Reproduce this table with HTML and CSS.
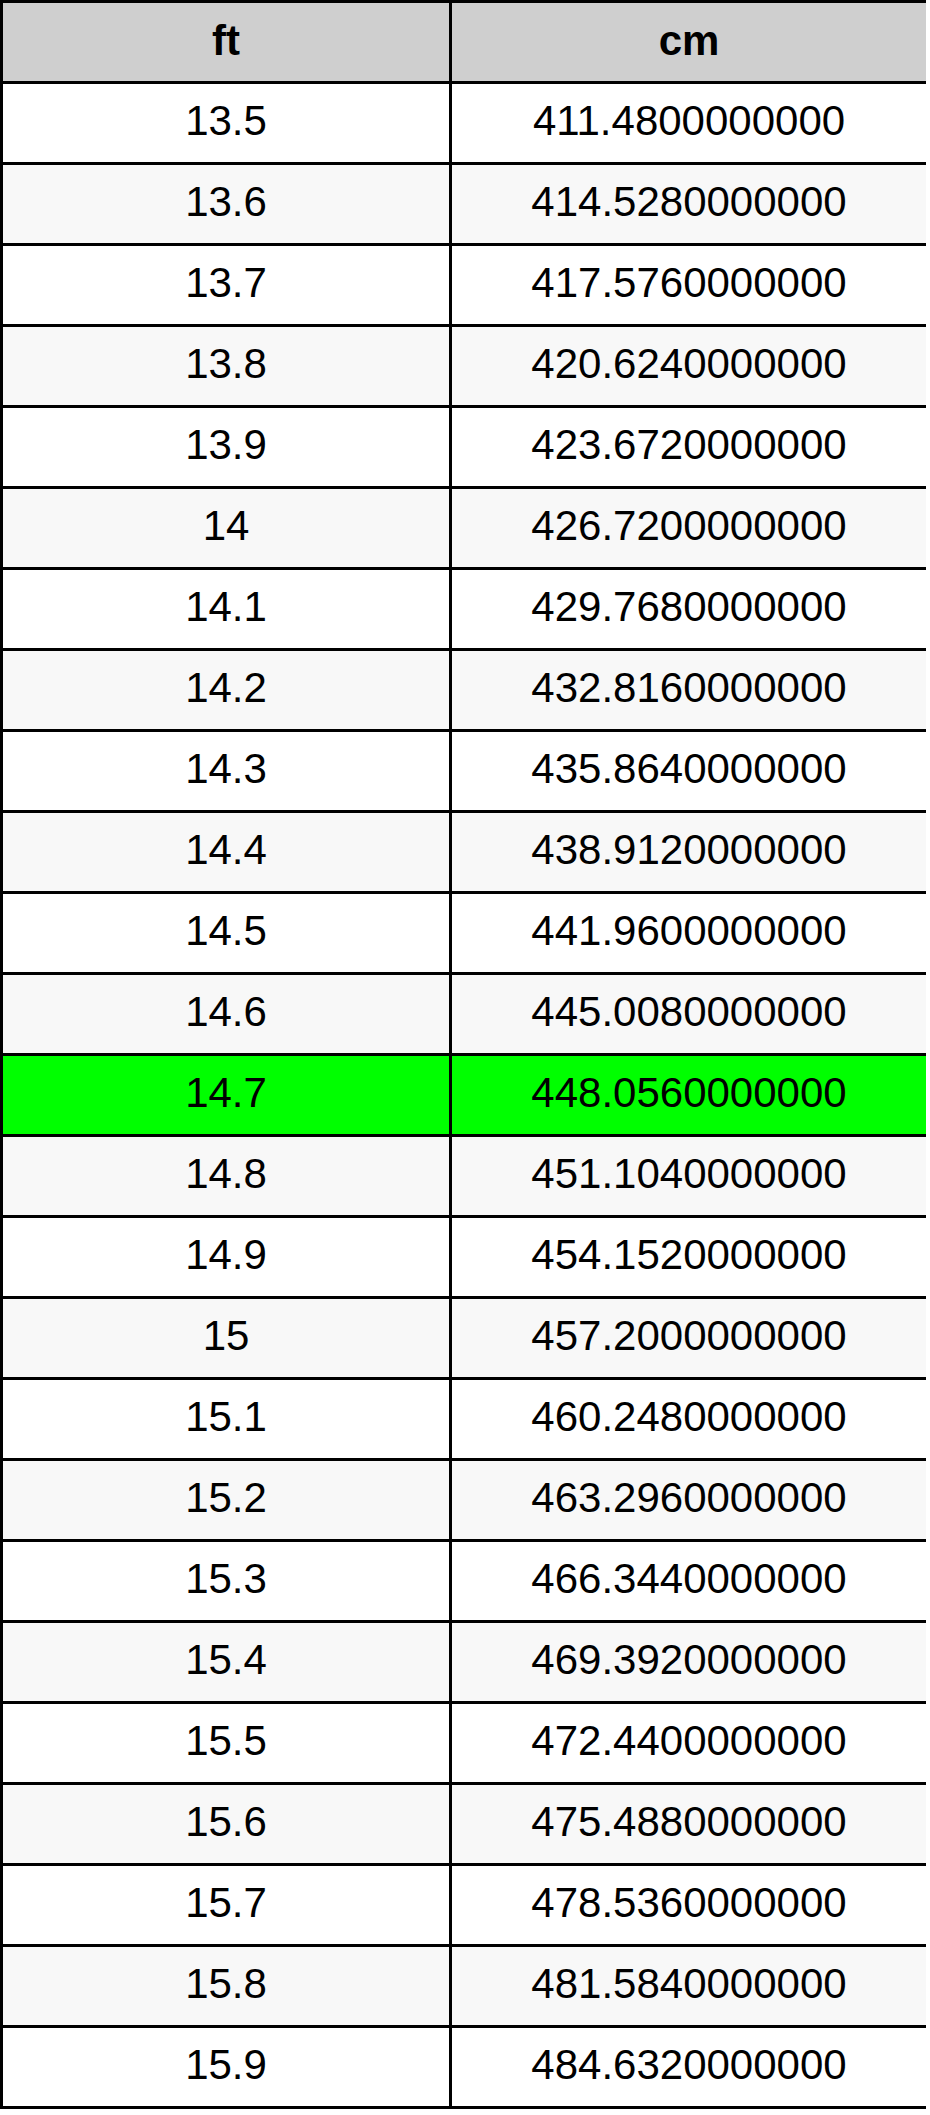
FILE: index.html
```html
<!DOCTYPE html>
<html>
<head>
<meta charset="utf-8">
<link rel="stylesheet" href="styles.css">
</head>
<body>
<div class="conv">
<div class="cell head">ft</div><div class="cell head">cm</div>
<div class="cell">13.5</div><div class="cell">411.4800000000</div>
<div class="cell alt">13.6</div><div class="cell alt">414.5280000000</div>
<div class="cell">13.7</div><div class="cell">417.5760000000</div>
<div class="cell alt">13.8</div><div class="cell alt">420.6240000000</div>
<div class="cell">13.9</div><div class="cell">423.6720000000</div>
<div class="cell alt">14</div><div class="cell alt">426.7200000000</div>
<div class="cell">14.1</div><div class="cell">429.7680000000</div>
<div class="cell alt">14.2</div><div class="cell alt">432.8160000000</div>
<div class="cell">14.3</div><div class="cell">435.8640000000</div>
<div class="cell alt">14.4</div><div class="cell alt">438.9120000000</div>
<div class="cell">14.5</div><div class="cell">441.9600000000</div>
<div class="cell alt">14.6</div><div class="cell alt">445.0080000000</div>
<div class="cell hl">14.7</div><div class="cell hl">448.0560000000</div>
<div class="cell alt">14.8</div><div class="cell alt">451.1040000000</div>
<div class="cell">14.9</div><div class="cell">454.1520000000</div>
<div class="cell alt">15</div><div class="cell alt">457.2000000000</div>
<div class="cell">15.1</div><div class="cell">460.2480000000</div>
<div class="cell alt">15.2</div><div class="cell alt">463.2960000000</div>
<div class="cell">15.3</div><div class="cell">466.3440000000</div>
<div class="cell alt">15.4</div><div class="cell alt">469.3920000000</div>
<div class="cell">15.5</div><div class="cell">472.4400000000</div>
<div class="cell alt">15.6</div><div class="cell alt">475.4880000000</div>
<div class="cell">15.7</div><div class="cell">478.5360000000</div>
<div class="cell alt">15.8</div><div class="cell alt">481.5840000000</div>
<div class="cell">15.9</div><div class="cell">484.6320000000</div>
</div>
</body>
</html>
```
FILE: styles.css
```css
html, body {
  margin: 0;
  padding: 0;
  background: #ffffff;
}
.conv {
  display: grid;
  grid-template-columns: 446px 474px;
  grid-auto-rows: 78px;
  gap: 3px;
  padding: 3px;
  width: 920px;
  background: #000000;
  font-family: "Liberation Sans", Arial, sans-serif;
  font-size: 42px;
  color: #000000;
}
.cell {
  background: #ffffff;
  text-align: center;
  line-height: 74px;
  padding-bottom: 4px;
  white-space: nowrap;
}
.cell.head {
  background: #cfcfcf;
  font-weight: bold;
  line-height: 76px;
  padding-bottom: 2px;
}
.cell.alt {
  background: #f8f8f8;
}
.cell.hl {
  background: #00ff00;
}
```
